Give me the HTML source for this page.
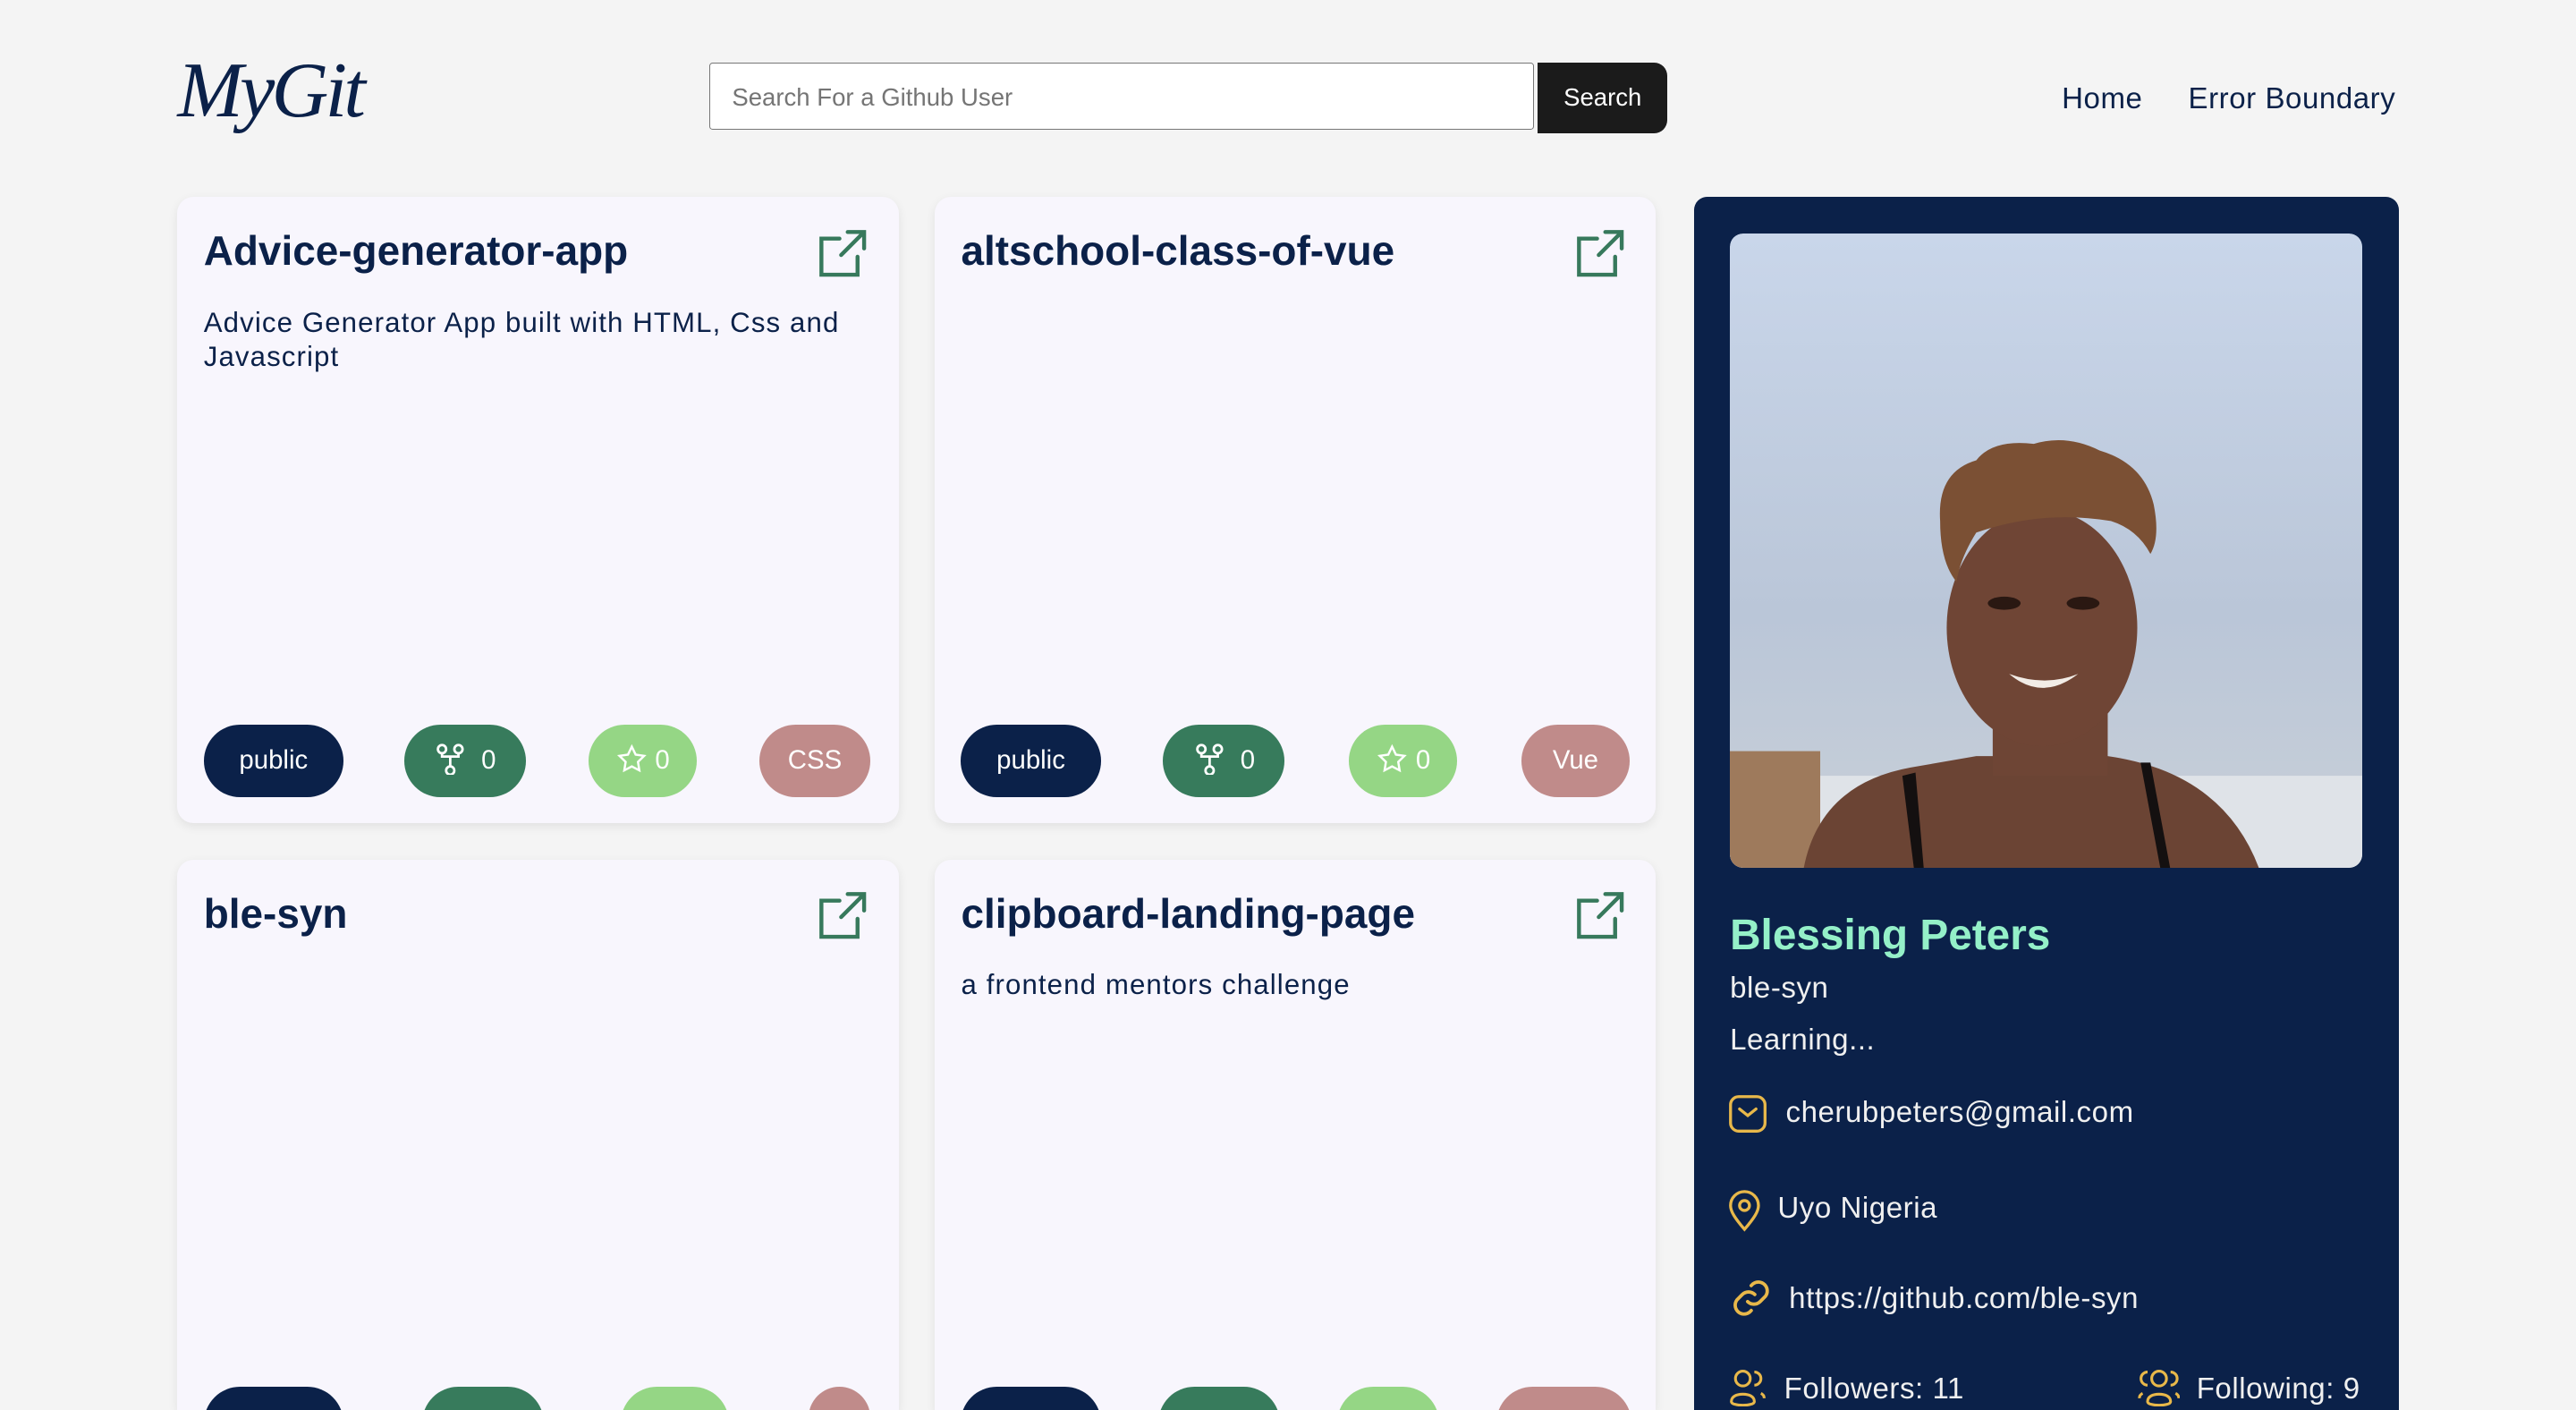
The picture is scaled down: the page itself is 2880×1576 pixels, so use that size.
<!DOCTYPE html>
<html><head><meta charset="utf-8"><style>
html,body{margin:0;padding:0;background:#f4f4f4;overflow:hidden}
body{width:1568px;height:858px;zoom:1.83673;position:relative;font-family:"Liberation Sans",sans-serif;color:#0b2149;overflow:hidden}
.abs{position:absolute}
.logo{left:108px;top:27px;font-family:"Liberation Serif",serif;font-style:italic;font-size:48px;color:#0b2149;letter-spacing:-2px}
.search{left:432px;top:38px;width:502px;height:41px;border:1px solid #767676;border-radius:2px;background:#fff;box-sizing:border-box}
.search span{position:absolute;left:13px;top:12px;font-size:15px;color:#757575}
.btn{left:936px;top:38px;width:79px;height:43px;background:#1b1b1b;border-radius:0 8px 8px 0;color:#fff;font-size:15px;text-align:center;line-height:43px}
.nav{top:50px;font-size:18px;color:#0b2149;letter-spacing:.3px}
.card{background:#f8f6fd;border-radius:10px;box-shadow:0 2px 6px rgba(0,0,0,.08);width:439px;height:381px;overflow:hidden}
.card.r2{height:335px;border-radius:10px 10px 0 0}
.card h2{position:absolute;left:16px;top:18px;margin:0;font-size:25px;font-weight:bold;letter-spacing:0}
.card p{position:absolute;left:16px;top:66px;margin:0;width:415px;font-size:17px;line-height:21px;letter-spacing:.6px}
.ext{position:absolute;left:388px;top:17px}
.b{position:absolute;top:321px;height:44px;border-radius:22px;color:#fff;font-size:16px;line-height:44px;text-align:center}
.prof{left:1031px;top:120px;width:429px;height:738px;background:#0b2149;border-radius:8px 8px 0 0;overflow:hidden}
.pt{position:absolute;color:#f0f0f0;font-size:18px;letter-spacing:.3px}
</style></head><body>
<div class="abs logo">MyGit</div>
<div class="abs search"><span>Search For a Github User</span></div>
<div class="abs btn">Search</div>
<div class="abs nav" style="left:1255px">Home</div>
<div class="abs nav" style="left:1332px">Error Boundary</div>

<div class="abs card" style="left:108px;top:120px">
<h2>Advice-generator-app</h2>
<svg class="ext" width="34" height="34" viewBox="0 0 34 34" fill="none" stroke="#37795c" stroke-width="2.4" stroke-linecap="round"><path d="M15 8H4v22h22V19M20 4h10v10M30 4L16 18"/></svg>
<p>Advice Generator App built with HTML, Css and Javascript</p>
<div class="b" style="left:16px;width:85px;background:#0b2149">public</div>
<div class="b" style="left:138px;width:74px;background:#377b5c"><svg width="20" height="20" viewBox="0 0 20 20" fill="none" stroke="#fff" stroke-width="1.5" style="vertical-align:-4px"><circle cx="5" cy="4" r="2.5"/><circle cx="15" cy="4" r="2.5"/><circle cx="10" cy="17" r="2.5"/><path d="M5 6.5v2h10v-2M10 8.5v6"/></svg>&nbsp; 0</div>
<div class="b" style="left:250px;width:66px;background:#95d685"><svg width="20" height="20" viewBox="0 0 24 24" fill="none" stroke="#fff" stroke-width="1.6" style="vertical-align:-4px"><path d="M12 3l2.8 5.8 6.2.9-4.5 4.4 1 6.2L12 17.4l-5.5 2.9 1-6.2L3 9.7l6.2-.9z"/></svg> 0</div>
<div class="b" style="left:354px;width:68px;background:#c08b8a">CSS</div>
</div>

<div class="abs card" style="left:569px;top:120px">
<h2>altschool-class-of-vue</h2>
<svg class="ext" width="34" height="34" viewBox="0 0 34 34" fill="none" stroke="#37795c" stroke-width="2.4" stroke-linecap="round"><path d="M15 8H4v22h22V19M20 4h10v10M30 4L16 18"/></svg>
<div class="b" style="left:16px;width:85px;background:#0b2149">public</div>
<div class="b" style="left:139px;width:74px;background:#377b5c"><svg width="20" height="20" viewBox="0 0 20 20" fill="none" stroke="#fff" stroke-width="1.5" style="vertical-align:-4px"><circle cx="5" cy="4" r="2.5"/><circle cx="15" cy="4" r="2.5"/><circle cx="10" cy="17" r="2.5"/><path d="M5 6.5v2h10v-2M10 8.5v6"/></svg>&nbsp; 0</div>
<div class="b" style="left:252px;width:66px;background:#95d685"><svg width="20" height="20" viewBox="0 0 24 24" fill="none" stroke="#fff" stroke-width="1.6" style="vertical-align:-4px"><path d="M12 3l2.8 5.8 6.2.9-4.5 4.4 1 6.2L12 17.4l-5.5 2.9 1-6.2L3 9.7l6.2-.9z"/></svg> 0</div>
<div class="b" style="left:357px;width:66px;background:#c08b8a">Vue</div>
</div>

<div class="abs card r2" style="left:108px;top:523px">
<h2>ble-syn</h2>
<svg class="ext" width="34" height="34" viewBox="0 0 34 34" fill="none" stroke="#37795c" stroke-width="2.4" stroke-linecap="round"><path d="M15 8H4v22h22V19M20 4h10v10M30 4L16 18"/></svg>
<div class="b" style="left:16px;width:85px;background:#0b2149"></div>
<div class="b" style="left:149px;width:74px;background:#377b5c"></div>
<div class="b" style="left:270px;width:66px;background:#95d685"></div>
<div class="b" style="left:384px;width:38px;background:#c08b8a"></div>
</div>

<div class="abs card r2" style="left:569px;top:523px">
<h2>clipboard-landing-page</h2>
<svg class="ext" width="34" height="34" viewBox="0 0 34 34" fill="none" stroke="#37795c" stroke-width="2.4" stroke-linecap="round"><path d="M15 8H4v22h22V19M20 4h10v10M30 4L16 18"/></svg>
<p>a frontend mentors challenge</p>
<div class="b" style="left:16px;width:85px;background:#0b2149"></div>
<div class="b" style="left:136px;width:74px;background:#377b5c"></div>
<div class="b" style="left:245px;width:62px;background:#95d685"></div>
<div class="b" style="left:342px;width:82px;background:#c08b8a"></div>
</div>

<div class="abs prof">
<svg style="position:absolute;left:22px;top:22px;border-radius:8px" width="385" height="386" viewBox="0 0 385 386">
<defs><linearGradient id="sk" x1="0" y1="0" x2="0" y2="1"><stop offset="0" stop-color="#c9d6ea"/><stop offset=".6" stop-color="#bac6d8"/><stop offset="1" stop-color="#c9d0d8"/></linearGradient>
<clipPath id="c"><rect width="385" height="386" rx="8"/></clipPath></defs>
<g clip-path="url(#c)">
<rect width="385" height="386" fill="url(#sk)"/>
<rect x="0" y="330" width="385" height="56" fill="#dfe3e8"/>
<rect x="0" y="315" width="55" height="71" fill="#9e7a5c"/>
<path d="M45 386 Q55 335 110 325 L150 318 L230 318 Q300 328 322 386Z" fill="#6b4434"/>
<path d="M105 330 L112 386 L118 386 L113 328Z M250 322 L262 386 L268 386 L256 322Z" fill="#141010"/>
<rect x="160" y="270" width="70" height="60" fill="#6e4535"/>
<ellipse cx="190" cy="240" rx="58" ry="72" fill="#6f4535"/>
<path d="M128 175 Q126 145 150 138 Q160 125 185 128 Q205 122 225 132 Q252 140 258 165 Q262 185 256 195 Q248 180 232 175 Q190 168 150 182 Q140 198 138 212 Q128 200 128 175Z" fill="#7b5034"/>
<path d="M170 268 Q190 285 212 268 Q192 276 170 268Z" fill="#f2ece6"/>
<ellipse cx="167" cy="225" rx="10" ry="4" fill="#2a1812"/><ellipse cx="215" cy="225" rx="10" ry="4" fill="#2a1812"/>
</g></svg>
<div class="abs" style="left:22px;top:434px;font-size:26px;font-weight:bold;color:#94f0c8">Blessing Peters</div>
<div class="pt" style="left:22px;top:471px">ble-syn</div>
<div class="pt" style="left:22px;top:503px">Learning...</div>
<svg class="abs" style="left:21px;top:546px" width="24" height="24" viewBox="0 0 24 24" fill="none" stroke="#e8b84a" stroke-width="1.8"><rect x="1.5" y="1.5" width="21" height="21" rx="5"/><path d="M7 9l5 4 5-4" stroke-linecap="round"/></svg>
<div class="pt" style="left:56px;top:547px">cherubpeters@gmail.com</div>
<svg class="abs" style="left:21px;top:604px" width="20" height="26" viewBox="0 0 20 26" fill="none" stroke="#e8b84a" stroke-width="1.8"><path d="M10 24C4 17 1.5 13 1.5 9.5a8.5 8.5 0 0117 0C18.5 13 16 17 10 24Z"/><circle cx="10" cy="9.5" r="3"/></svg>
<div class="pt" style="left:51px;top:605px">Uyo Nigeria</div>
<svg class="abs" style="left:22px;top:657px" width="26" height="26" viewBox="0 0 24 24" fill="none" stroke="#e8b84a" stroke-width="1.9" stroke-linecap="round"><path d="M10 14a5 5 0 007 0l3-3a5 5 0 00-7-7l-1 1M14 10a5 5 0 00-7 0l-3 3a5 5 0 007 7l1-1"/></svg>
<div class="pt" style="left:58px;top:660px">https://github.com/ble-syn</div>
<svg class="abs" style="left:21px;top:712px" width="24" height="24" viewBox="0 0 24 24" fill="none" stroke="#e8b84a" stroke-width="1.7"><circle cx="9" cy="7" r="4.5"/><path d="M2 21c0-3 3-4.5 7-4.5s7 1.5 7 4.5S2 24 2 21zM16 3a4 4 0 010 8M20 16c1.5.7 2 1.8 2 3"/></svg>
<div class="pt" style="left:55px;top:715px">Followers: 11</div>
<svg class="abs" style="left:270px;top:712px" width="26" height="24" viewBox="0 0 26 24" fill="none" stroke="#e8b84a" stroke-width="1.7"><circle cx="13" cy="7" r="4.5"/><path d="M6 21c0-3 3-4.5 7-4.5s7 1.5 7 4.5-14 3-14 0zM6 3a4 4 0 000 8M20 3a4 4 0 010 8M3 16c-1.5.7-2 1.8-2 3M23 16c1.5.7 2 1.8 2 3"/></svg>
<div class="pt" style="left:306px;top:715px">Following: 9</div>
</div>
</body></html>
